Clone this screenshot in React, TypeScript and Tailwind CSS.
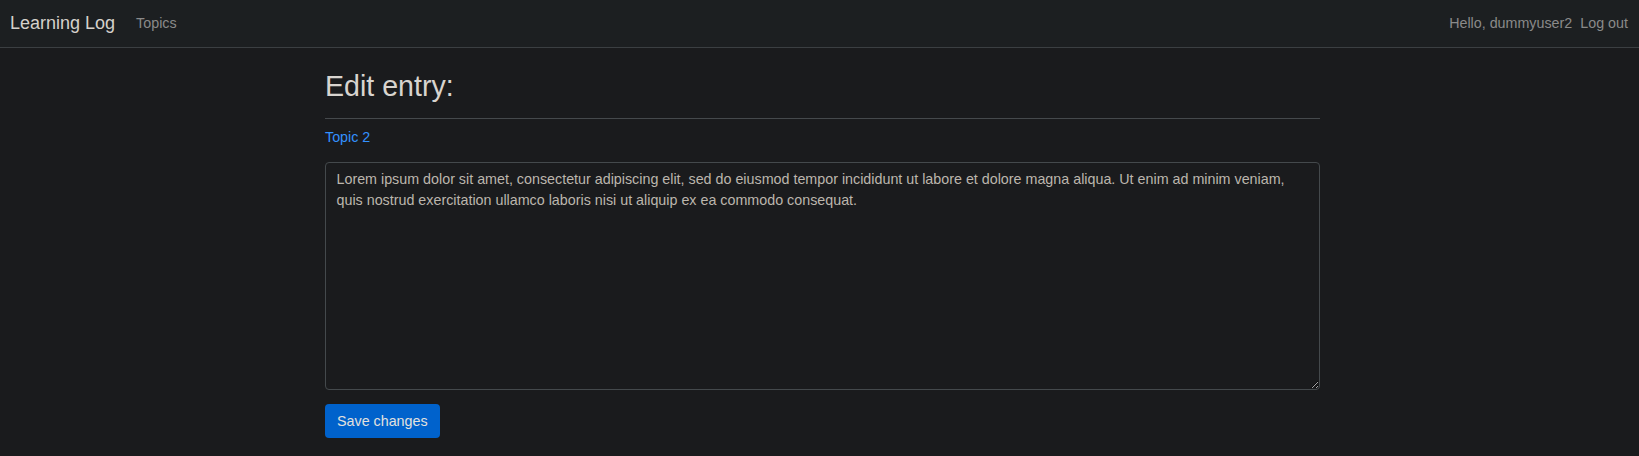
import React from 'react';

const entryText =
  'Lorem ipsum dolor sit amet, consectetur adipiscing elit, sed do eiusmod tempor incididunt ut labore et dolore magna aliqua. Ut enim ad minim veniam, quis nostrud exercitation ullamco laboris nisi ut aliquip ex ea commodo consequat.';

function Navbar() {
  return (
    <nav className="h-[48px] border-b border-[#3b3f42] bg-[#1c1f21] flex items-center pl-[10px] pr-[11px] pb-[1px]">
      <a href="#" className="text-[18px] leading-[26px] text-[#d5d1cb]">Learning Log</a>
      <a href="#" className="ml-[21px] text-[14.3px] leading-[21px] text-[#8a8a8a]">Topics</a>
      <div className="ml-auto flex items-center gap-[8px] text-[14.3px] leading-[21px] text-[#8a8a8a]">
        <span>Hello, dummyuser2</span>
        <a href="#">Log out</a>
      </div>
    </nav>
  );
}

export default function App() {
  return (
    <div className="min-h-[456px] bg-[#1a1b1d] text-[#d5d1cb] w-full font-['Liberation_Sans',Arial,sans-serif]">
      <Navbar />

      <main className="ml-[325px] w-[995px] pt-[21px]">
        <div className="pb-[15px] border-b border-[#45494c]">
          <h3 className="text-[28.6px] leading-[34px] text-[#d8d4cf]">Edit entry:</h3>
        </div>

        <p className="mt-[8px] text-[14.3px] leading-[21px]">
          <a href="#" className="text-[#3391ff]">Topic 2</a>
        </p>

        <form className="mt-[14px]">
          <textarea
            className="block w-full h-[228px] bg-[#1a1b1d] border border-[#44494c] rounded-[4px] px-[10.5px] pt-[6px] pb-[5px] text-[14.3px] leading-[21px] text-[#bcb6ad] outline-none resize-y"
            defaultValue={entryText}
          />
          <button
            type="button"
            className="mt-[14px] h-[34px] px-[12px] rounded-[4px] bg-[#0062cc] text-[14.3px] leading-[21px] text-[#e3e1de]"
          >
            Save changes
          </button>
        </form>
      </main>
    </div>
  );
}
